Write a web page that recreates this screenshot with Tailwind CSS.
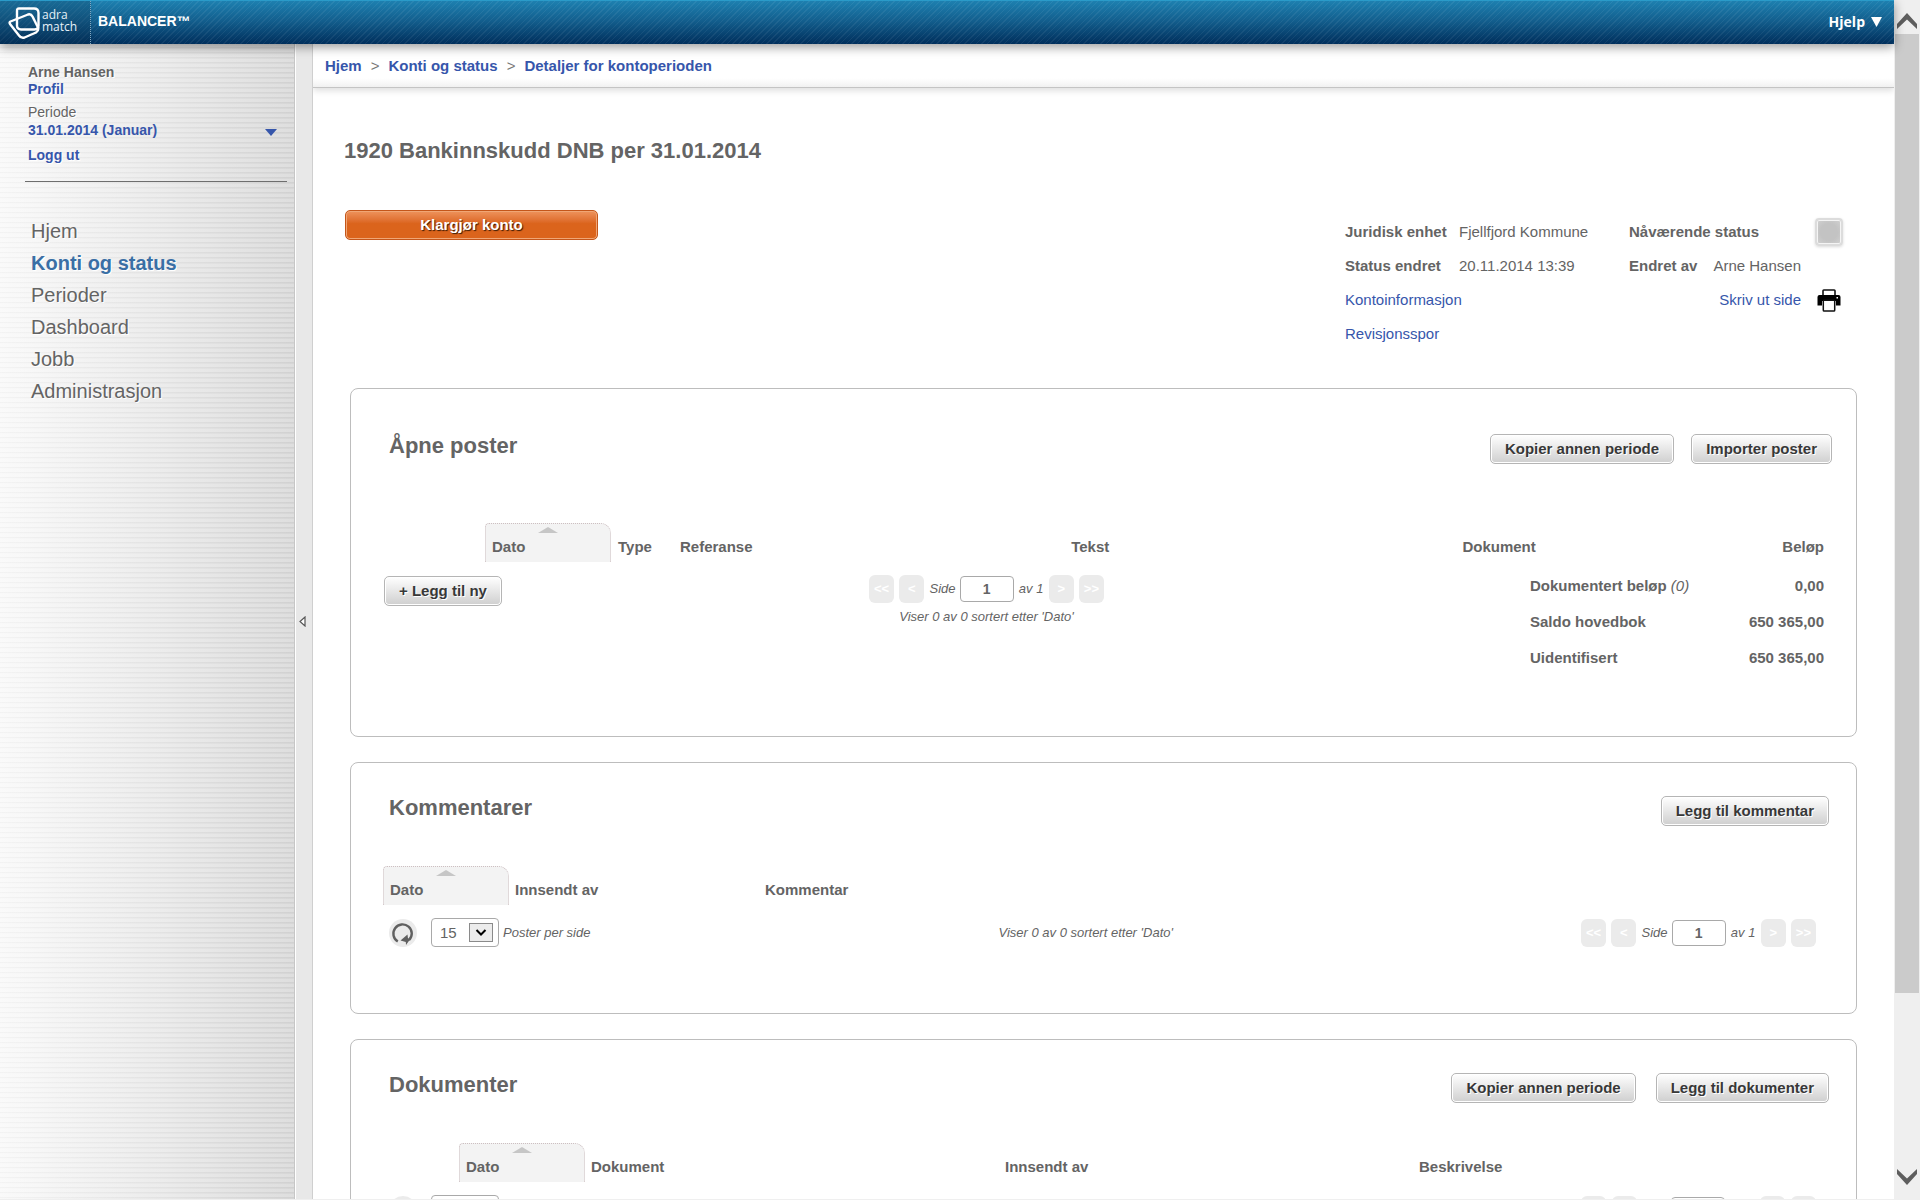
<!DOCTYPE html>
<html lang="no">
<head>
<meta charset="utf-8">
<title>Detaljer for kontoperioden</title>
<script src="https://cdn.jsdelivr.net/npm/@tailwindcss/browser@4"></script>
</head>
<body class="font-['Liberation_Sans',Arial,sans-serif] text-[15px] leading-5 text-[#646464] bg-white">
<div class="flex h-screen overflow-hidden border-b border-[#efefef]">
  <div class="flex min-w-0 flex-1 flex-col">
    <header class="relative z-20 flex h-11 shrink-0 items-stretch border-t border-[#2a9bc9] bg-[repeating-linear-gradient(135deg,rgba(255,255,255,0.06)_0_1px,transparent_1px_4px),linear-gradient(#1d80b0,#135f8e_45%,#002f5c)] text-white shadow-[0_3px_10px_rgba(0,0,0,0.4)]">
      <a href="#" class="flex w-[91px] items-center gap-0.5 border-r border-dotted border-[#7fa9c4] bg-[#0a2a48]/25 pl-2" aria-label="adra match">
        <svg class="h-8 w-8 shrink-0" viewBox="0 0 32 32" fill="none" stroke="#fff" stroke-linejoin="round">
          <path d="M11 1.500H26Q30.500 1.500 30.500 6V18.500Q30.500 22.500 26.500 22.500H13Q9 22.500 9 18.500V4Q9 1.500 11 1.500Z" stroke-width="2.400"/>
          <path d="M2.500 14.500L20 7.500Q23 6.500 24.500 9.500L30 20.500Q31 23.500 28 25.500L16.500 30.500Q13 31.500 11 28.500L2 17Q1 15.200 2.500 14.500Z" stroke-width="2.400"/>
        </svg>
        <span class="flex flex-col pb-1 font-['Open_Sans',sans-serif] text-xs leading-3 font-medium text-[#e6f1f8]"><span>adra</span><span>match</span></span>
      </a>
      <a href="#" class="flex items-center pb-1 pl-[7px] text-sm font-bold">BALANCER™</a>
      <button type="button" class="ml-auto flex items-center gap-1.5 pr-3 pb-0.5 font-['Open_Sans',sans-serif] text-sm font-bold">Hjelp
        <svg class="h-[10px] w-[11px]" viewBox="0 0 11 10"><path d="M0 0H11L5.500 10Z" fill="#fff"/></svg>
      </button>
    </header>

    <div class="flex min-h-0 flex-1">
      <aside class="w-[295px] shrink-0 border-r border-[#c6c6c6] bg-[repeating-linear-gradient(rgba(255,255,255,0.2)_0_3px,rgba(0,0,0,0.025)_3px_4px,transparent_4px_5px),linear-gradient(to_right,#f9f9f9,#e9e9e9_50%,#d6d6d6)] pt-5 text-sm leading-[17px]">
        <div class="pr-[17px] pl-7 [text-shadow:1px_1px_0_#fff]">
          <p class="font-bold">Arne Hansen</p>
          <a href="#" class="block font-bold text-[#3656ab]">Profil</a>
          <p class="mt-1.5" id="periode">Periode</p>
          <button type="button" aria-labelledby="periode" class="flex w-full items-center justify-between pt-px font-bold text-[#3656ab]">31.01.2014 (Januar)
            <svg class="mt-1 h-[7px] w-3" viewBox="0 0 12 7"><path d="M0 0H12L6 7Z" fill="#3656ab"/></svg>
          </button>
          <a href="#" class="mt-2 block font-bold text-[#3656ab]">Logg ut</a>
        </div>
        <hr class="mt-[17px] mr-[7px] ml-[25px] border-t border-[#6e6e6e]">
        <nav class="mt-[33px] flex flex-col pl-[31px] text-xl leading-8 [text-shadow:1px_1px_0_#fff]">
          <a href="#">Hjem</a>
          <a href="#" class="font-bold text-[#3a6fa5]">Konti og status</a>
          <a href="#">Perioder</a>
          <a href="#">Dashboard</a>
          <a href="#">Jobb</a>
          <a href="#">Administrasjon</a>
        </nav>
      </aside>
      <button type="button" aria-label="Skjul meny" class="flex w-[18px] shrink-0 items-center border-r border-l border-r-[#cfcfcf] border-l-white bg-[#e8e8e8] pl-[3px]">
        <svg class="h-[11px] w-[7px]" viewBox="0 0 7 11"><path d="M6 1V10L1 5.500Z" fill="#fff" stroke="#555" stroke-width="1.200"/></svg>
      </button>

      <main class="min-w-0 flex-1 overflow-hidden">
        <nav aria-label="Brødsmuler" class="flex h-11 items-center gap-[9px] border-b border-[#c4c4c4] bg-linear-to-b from-white from-80% to-[#f1f1f1] pl-3 font-bold text-[#3656ab] shadow-[0_3px_6px_rgba(0,0,0,0.12)]">
          <a href="#">Hjem</a><span class="font-normal text-[#777]">&gt;</span>
          <a href="#">Konti og status</a><span class="font-normal text-[#777]">&gt;</span>
          <a href="#">Detaljer for kontoperioden</a>
        </nav>

        <h1 class="mt-[49px] ml-[31px] text-[22px] leading-7 font-bold">1920 Bankinnskudd DNB per 31.01.2014</h1>

        <section class="mt-[45px] mr-[51px] ml-8 flex items-start justify-between">
          <button type="button" class="h-[30px] w-[253px] rounded-[5px] border border-[#c4561a] bg-linear-to-b from-[#ee935c] to-[#db641c] to-45% font-bold text-white shadow-[inset_0_0_0_1px_#f0a675] [text-shadow:1px_1px_1px_#3a1a05]">Klargjør konto</button>
          <div class="mt-[5px] grid auto-rows-[34px] grid-cols-[284px_186px_28px] items-center">
            <p class="flex"><strong class="w-[114px]">Juridisk enhet</strong>Fjellfjord Kommune</p>
            <p class="font-bold">Nåværende status</p>
            <span class="h-7 rounded-[4px] border-2 border-[#dcdcdc] bg-[radial-gradient(#c3c3c3_50%,#d2d2d2)] shadow-[inset_0_0_0_1px_#f4f4f4,0_1px_3px_rgba(0,0,0,0.15)]"></span>
            <p class="flex"><strong class="w-[114px]">Status endret</strong>20.11.2014 13:39</p>
            <p class="flex justify-between pr-3.5"><strong>Endret av</strong>Arne Hansen</p>
            <span></span>
            <a href="#" class="text-[#3656ab]">Kontoinformasjon</a>
            <a href="#" class="pr-3.5 text-right text-[#3656ab]">Skriv ut side</a>
            <button type="button" aria-label="Skriv ut" class="flex justify-center">
              <svg class="h-[23px] w-6" viewBox="0 0 24 23">
                <path d="M6 6V1.800Q6 1 6.800 1H17.200Q18 1 18 1.800V6" fill="none" stroke="#111" stroke-width="1.600"/>
                <path d="M2.500 6H21.500Q23.500 6 23.500 8V16.500H19V12H5V16.500H0.500V8Q0.500 6 2.500 6Z" fill="#000"/>
                <rect x="6.300" y="11.300" width="11.400" height="10.700" rx="0.800" fill="#fff" stroke="#111" stroke-width="1.500"/>
                <rect x="19.500" y="8" width="1.500" height="1.500" fill="#fff"/>
              </svg>
            </button>
            <a href="#" class="text-[#3656ab]">Revisjonsspor</a>
          </div>
        </section>

        <div class="mt-[37px] mr-[37px] ml-[37px] flex flex-col gap-[25px]">
          <section class="rounded-lg border border-[#bdbdbd] pt-[45px] pr-6 pb-[60px] pl-8">
            <div class="flex items-start gap-[17px]">
              <h2 class="mr-auto ml-1.5 text-[22px] leading-6 font-bold">Åpne poster</h2>
              <button type="button" class="h-[30px] rounded-[5px] border border-[#b5b5b5] bg-linear-to-b from-white to-[#cfcfcf] px-3.5 font-bold text-[#383838] shadow-[inset_0_0_0_1px_#fff] [text-shadow:1px_1px_0_#fff]">Kopier annen periode</button>
              <button type="button" class="h-[30px] rounded-[5px] border border-[#b5b5b5] bg-linear-to-b from-white to-[#cfcfcf] px-3.5 font-bold text-[#383838] shadow-[inset_0_0_0_1px_#fff] [text-shadow:1px_1px_0_#fff]">Importer poster</button>
            </div>
            <table class="mt-[59px] w-full table-fixed text-left">
              <thead><tr class="align-bottom">
                <td class="w-[102px]"></td>
                <th class="w-[126px]" aria-sort="ascending">
                  <div class="flex h-[39px] flex-col justify-between rounded-tl-[4px] rounded-tr-[10px] border-x border-t border-dotted border-[#cdbfc1] bg-[#f3f3f3] px-1.5 pt-[3px] pb-[5px]">
                    <svg class="h-[6px] w-5 self-center" viewBox="0 0 20 6"><path d="M0 6L10 0L20 6Z" fill="#c6c6c6"/></svg>Dato
                  </div>
                </th>
                <th class="w-[62px] px-[7px] pb-[5px]">Type</th>
                <th class="w-[27%] px-[7px] pb-[5px]">Referanse</th>
                <th class="w-[27%] px-[7px] pb-[5px]">Tekst</th>
                <th class="px-[7px] pb-[5px]">Dokument</th>
                <th class="pr-2 pb-[5px] text-right">Beløp</th>
              </tr></thead>
            </table>
            <div class="grid grid-cols-[486fr_235px_720fr] items-start pr-2">
              <button type="button" class="mt-3.5 ml-px h-[30px] justify-self-start rounded-[5px] border border-[#b5b5b5] bg-linear-to-b from-white to-[#cfcfcf] px-3.5 font-bold text-[#383838] shadow-[inset_0_0_0_1px_#fff] [text-shadow:1px_1px_0_#fff]">+ Legg til ny</button>
              <div class="mt-[13px] text-center text-[13px] italic">
                <div class="flex h-7 items-center justify-between">
                  <button type="button" class="h-7 w-[25px] rounded-[6px] bg-[#ebebeb] font-bold text-white not-italic">&lt;&lt;</button>
                  <button type="button" class="h-7 w-[25px] rounded-[6px] bg-[#ebebeb] font-bold text-white not-italic">&lt;</button>
                  <label class="flex items-center gap-1">Side <input value="1" class="h-[26px] w-[54px] rounded-[4px] border border-[#a9a9a9] text-center text-sm font-bold not-italic"></label>
                  <span>av 1</span>
                  <button type="button" class="h-7 w-[25px] rounded-[6px] bg-[#ebebeb] font-bold text-white not-italic">&gt;</button>
                  <button type="button" class="h-7 w-[25px] rounded-[6px] bg-[#ebebeb] font-bold text-white not-italic">&gt;&gt;</button>
                </div>
                <p class="mt-1">Viser 0 av 0 sortert etter 'Dato'</p>
              </div>
              <table class="mt-1.5 w-[294px] justify-self-end text-left font-bold">
                <tbody>
                  <tr class="h-9"><th>Dokumentert beløp <em class="font-normal">(0)</em></th><td class="text-right">0,00</td></tr>
                  <tr class="h-9"><th>Saldo hovedbok</th><td class="text-right">650 365,00</td></tr>
                  <tr class="h-9"><th>Uidentifisert</th><td class="text-right">650 365,00</td></tr>
                </tbody>
              </table>
            </div>
          </section>

          <section class="rounded-lg border border-[#bdbdbd] pt-[33px] pr-6 pb-[66px] pl-8">
            <div class="flex items-start pr-[3px]">
              <h2 class="mr-auto ml-1.5 text-[22px] leading-6 font-bold">Kommentarer</h2>
              <button type="button" class="h-[30px] rounded-[5px] border border-[#b5b5b5] bg-linear-to-b from-white to-[#cfcfcf] px-3.5 font-bold text-[#383838] shadow-[inset_0_0_0_1px_#fff] [text-shadow:1px_1px_0_#fff]">Legg til kommentar</button>
            </div>
            <table class="mt-10 w-full table-fixed text-left">
              <thead><tr class="align-bottom">
                <th class="w-[126px]" aria-sort="ascending">
                  <div class="flex h-[39px] flex-col justify-between rounded-tl-[4px] rounded-tr-[10px] border-x border-t border-dotted border-[#cdbfc1] bg-[#f3f3f3] px-1.5 pt-[3px] pb-[5px]">
                    <svg class="h-[6px] w-5 self-center" viewBox="0 0 20 6"><path d="M0 6L10 0L20 6Z" fill="#c6c6c6"/></svg>Dato
                  </div>
                </th>
                <th class="w-[250px] px-1.5 pb-[5px]">Innsendt av</th>
                <th class="px-1.5 pb-[5px]">Kommentar</th>
              </tr></thead>
            </table>
            <div class="mt-[13px] flex h-[29px] items-center justify-between pr-4 pl-1.5 text-[13px] italic">
              <div class="flex items-center">
                <button type="button" aria-label="Oppdater" class="flex size-7 items-center justify-center rounded-full bg-[#ebebeb]">
                  <svg class="size-6" viewBox="0 0 24 24"><path d="M6.800 20.500A9.200 9.200 0 1 1 18 19.200" fill="none" stroke="#606060" stroke-width="2.400"/><path d="M9.500 19.500L16.500 13.500L17 17.500L20 17L15 24L14.800 21Z" fill="#606060"/></svg>
                </button>
                <label class="ml-3.5 flex items-center gap-1">
                  <span class="relative flex">
                    <select class="h-[29px] w-[68px] appearance-none rounded-[4px] border border-[#a9a9a9] pl-2 text-[15px] not-italic"><option>15</option></select>
                    <svg class="pointer-events-none absolute top-[5px] right-[6px] h-[19px] w-6" viewBox="0 0 24 19"><rect x="0.500" y="0.500" width="23" height="18" fill="#ececec" stroke="#8a8a8a"/><path d="M7.500 7L12 11.500L16.500 7" fill="none" stroke="#000" stroke-width="2"/></svg>
                  </span>Poster per side</label>
              </div>
              <p>Viser 0 av 0 sortert etter 'Dato'</p>
              <div class="flex h-7 w-[235px] items-center justify-between">
                <button type="button" class="h-7 w-[25px] rounded-[6px] bg-[#ebebeb] font-bold text-white not-italic">&lt;&lt;</button>
                <button type="button" class="h-7 w-[25px] rounded-[6px] bg-[#ebebeb] font-bold text-white not-italic">&lt;</button>
                <label class="flex items-center gap-1">Side <input value="1" class="h-[26px] w-[54px] rounded-[4px] border border-[#a9a9a9] text-center text-sm font-bold not-italic"></label>
                <span>av 1</span>
                <button type="button" class="h-7 w-[25px] rounded-[6px] bg-[#ebebeb] font-bold text-white not-italic">&gt;</button>
                <button type="button" class="h-7 w-[25px] rounded-[6px] bg-[#ebebeb] font-bold text-white not-italic">&gt;&gt;</button>
              </div>
            </div>
          </section>

          <section class="rounded-lg border border-[#bdbdbd] pt-[33px] pr-6 pb-[66px] pl-8">
            <div class="flex items-start gap-5 pr-[3px]">
              <h2 class="mr-auto ml-1.5 text-[22px] leading-6 font-bold">Dokumenter</h2>
              <button type="button" class="h-[30px] rounded-[5px] border border-[#b5b5b5] bg-linear-to-b from-white to-[#cfcfcf] px-3.5 font-bold text-[#383838] shadow-[inset_0_0_0_1px_#fff] [text-shadow:1px_1px_0_#fff]">Kopier annen periode</button>
              <button type="button" class="h-[30px] rounded-[5px] border border-[#b5b5b5] bg-linear-to-b from-white to-[#cfcfcf] px-3.5 font-bold text-[#383838] shadow-[inset_0_0_0_1px_#fff] [text-shadow:1px_1px_0_#fff]">Legg til dokumenter</button>
            </div>
            <table class="mt-10 w-full table-fixed text-left">
              <thead><tr class="align-bottom">
                <td class="w-[76px]"></td>
                <th class="w-[126px]" aria-sort="ascending">
                  <div class="flex h-[39px] flex-col justify-between rounded-tl-[4px] rounded-tr-[10px] border-x border-t border-dotted border-[#cdbfc1] bg-[#f3f3f3] px-1.5 pt-[3px] pb-[5px]">
                    <svg class="h-[6px] w-5 self-center" viewBox="0 0 20 6"><path d="M0 6L10 0L20 6Z" fill="#c6c6c6"/></svg>Dato
                  </div>
                </th>
                <th class="w-2/7 px-1.5 pb-[5px]">Dokument</th>
                <th class="w-2/7 px-1.5 pb-[5px]">Innsendt av</th>
                <th class="px-1.5 pb-[5px]">Beskrivelse</th>
              </tr></thead>
            </table>
            <div class="mt-[13px] flex h-[29px] items-center justify-between pr-4 pl-1.5 text-[13px] italic">
              <div class="flex items-center">
                <button type="button" aria-label="Oppdater" class="flex size-7 items-center justify-center rounded-full bg-[#ebebeb]">
                  <svg class="size-6" viewBox="0 0 24 24"><path d="M6.800 20.500A9.200 9.200 0 1 1 18 19.200" fill="none" stroke="#606060" stroke-width="2.400"/><path d="M9.500 19.500L16.500 13.500L17 17.500L20 17L15 24L14.800 21Z" fill="#606060"/></svg>
                </button>
                <select aria-label="Poster per side" class="ml-3.5 h-[29px] w-[68px] appearance-none rounded-[4px] border border-[#a9a9a9]"></select>
              </div>
              <div class="flex h-7 w-[235px] items-center justify-between">
                <button type="button" aria-label="Første" class="h-7 w-[25px] rounded-[6px] bg-[#ebebeb]"></button>
                <button type="button" aria-label="Forrige" class="h-7 w-[25px] rounded-[6px] bg-[#ebebeb]"></button>
                <input aria-label="Side" class="mr-1 ml-7 h-[26px] w-[54px] rounded-[4px] border border-[#a9a9a9]">
                <span class="w-5"></span>
                <button type="button" aria-label="Neste" class="h-7 w-[25px] rounded-[6px] bg-[#ebebeb]"></button>
                <button type="button" aria-label="Siste" class="h-7 w-[25px] rounded-[6px] bg-[#ebebeb]"></button>
              </div>
            </div>
          </section>
        </div>
      </main>
    </div>
  </div>

  <div class="flex w-[26px] shrink-0 flex-col items-center bg-[#efefef]" aria-hidden="true">
    <svg class="mt-[13px] h-4 w-5" viewBox="0 0 20 16"><path d="M0 11L10 0L20 11V16L10 6.500L0 16Z" fill="#5e5e5e"/></svg>
    <div class="mt-[5px] h-4/5 w-6 bg-[#cbcbcb]"></div>
    <svg class="mt-auto mb-3.5 h-4 w-5 shrink-0" viewBox="0 0 20 16"><path d="M0 5L10 16L20 5V0L10 9.500L0 0Z" fill="#5e5e5e"/></svg>
  </div>
</div>
</body>
</html>
